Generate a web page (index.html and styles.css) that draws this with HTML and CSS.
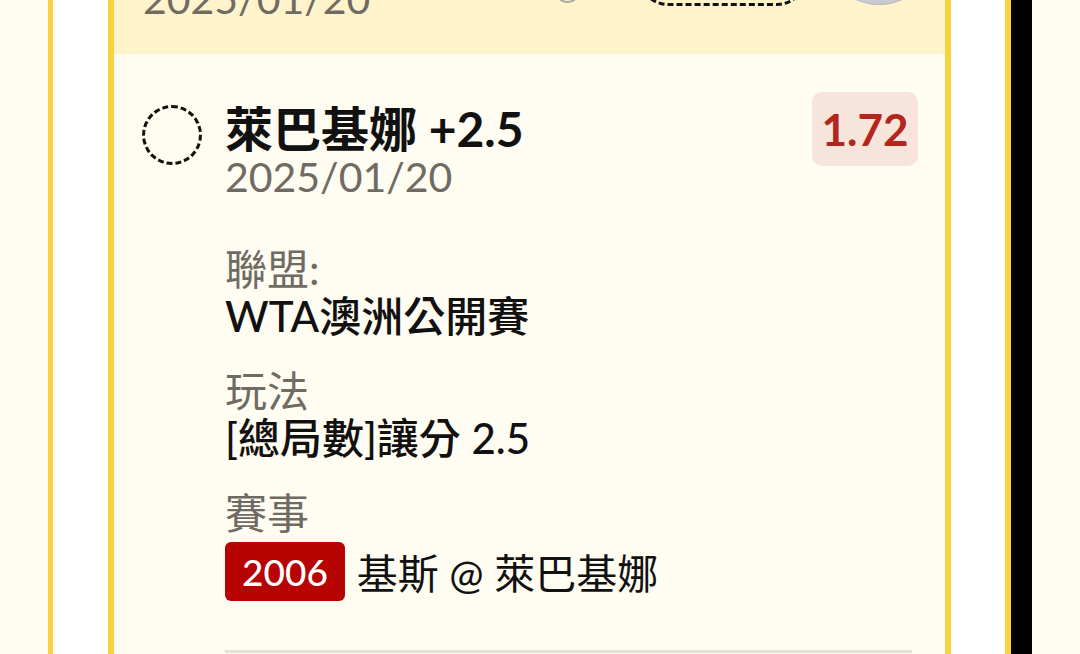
FILE: index.html
```html
<!doctype html>
<html>
    <head>
        <meta charset="utf-8" />
        <title>投注單</title>
        <link rel="stylesheet" href="styles.css">
    </head>
    <body>
        <div class="screen">
            <div class="frame">
                <div class="card">
                    <!-- previous pick, scrolled mostly out of view -->
                    <div class="card-head">
                        <div class="pick">
                            <div class="pick-name">萊巴基娜 +2.5</div>
                            <div class="pick-date">2025/01/20</div>
                        </div>
                        <span class="info-icon"></span>
                        <span class="stake-box"></span>
                        <span class="remove-btn"></span>
                    </div>

                    <div class="bet">
                        <span class="radio"></span>
                        <div class="bet-info">
                            <div class="pick-name">萊巴基娜 +2.5</div>
                            <div class="pick-date">2025/01/20</div>

                            <div class="details">
                                <div class="detail">
                                    <div class="detail-label">聯盟:</div>
                                    <div class="detail-value">WTA澳洲公開賽</div>
                                </div>
                                <div class="detail">
                                    <div class="detail-label">玩法</div>
                                    <div class="detail-value">[總局數]讓分 2.5</div>
                                </div>
                                <div class="detail">
                                    <div class="detail-label">賽事</div>
                                    <div class="match">
                                        <span class="match-no">2006</span>
                                        <span class="match-name">基斯 @ 萊巴基娜</span>
                                    </div>
                                </div>
                            </div>
                        </div>
                        <div class="odds">1.72</div>
                    </div>

                    <div class="divider"></div>
                </div>
            </div>
            <div class="edge"></div>
        </div>
    </body>
</html>
```

FILE: styles.css
```css
html{overflow : hidden;}

body {
    margin : 0;
    padding : 0;
    background : #fffcf2;
    font-family: Lato, "Noto Sans CJK TC", sans-serif;
    color : #111;
}

.screen {
    display : flex;
    height : 654px;
    padding-left : 48px;
    overflow : hidden;
}

.frame {
    width : 963px;
    padding : 0 54px 0 55px;
    box-sizing : border-box;
    border-left : 5px solid #f6d33f;
    border-right : 6px solid #f6d33f;
    background : #fff;
}

.edge {
    width : 21px;
    background : #000;
}

.card {
    margin-top : -100px;
    height : 900px;
    border-left : 6px solid #f6d33f;
    border-right : 6px solid #f6d33f;
    background : #fffcf1;
}

/* header: the pick above, cut off by the scroll */
.card-head {
    display : flex;
    align-items : flex-end;
    padding : 26px 11px 32px 29px;
    background : #fff3cc;
}

.pick {
    flex : 1;
}

.pick-name {
    font-size : 48px;
    font-weight : 700;
    line-height : 50px;
}

.pick-date {
    font-size : 41px;
    line-height : 46px;
    color : #6f6b63;
}

.info-icon {
    width : 23px;
    height : 23px;
    margin-bottom : 19px;
    border : 2px solid #a9a69e;
    border-radius : 50%;
}

.stake-box {
    width : 163px;
    height : 58px;
    margin : 0 0 16px 57px;
    border : 3px dashed #111;
    border-radius : 30px;
}

.remove-btn {
    width : 110px;
    height : 110px;
    margin : -40px 0 17px 17px;
    border-radius : 50%;
    background : #c9cacf;
    box-shadow : inset 0 0 0 1px #b8b9be;
}

/* current pick */
.bet {
    display : flex;
    align-items : flex-start;
    padding : 38px 27px 0 28px;
}

.radio {
    flex : none;
    width : 54px;
    height : 54px;
    margin-top : 13px;
    border : 3px dashed #111;
    border-radius : 50%;
}

.bet-info {
    flex : 1;
    margin : 12px 0 0 23px;
}

.odds {
    width : 106px;
    height : 74px;
    border-radius : 10px;
    background : #f7e5dc;
    color : #b3261e;
    font-size : 44px;
    font-weight : 700;
    line-height : 74px;
    text-align : center;
}

.details {
    margin-top : 46px;
}

.detail + .detail {
    margin-top : 28px;
}

.detail-label {
    font-size : 42px;
    line-height : 47px;
    color : #6f6b63;
}

.detail-value {
    font-size : 42px;
    font-weight : 500;
    line-height : 47px;
}

.match {
    display : flex;
    align-items : center;
    margin-top : 4px;
}

.match-no {
    height : 59px;
    padding : 0 17px;
    border-radius : 6px;
    background : #b80303;
    color : #fff;
    font-size : 37px;
    font-weight : 500;
    line-height : 59px;
}

.match-name {
    margin-left : 12px;
    font-size : 41px;
}

.divider {
    height : 3px;
    margin : 49px 33px 0 111px;
    background : #e5e2da;
}
```
